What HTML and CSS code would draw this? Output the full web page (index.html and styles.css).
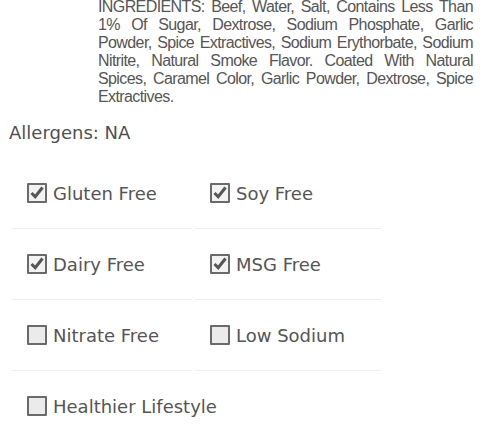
FILE: index.html
```html
<!DOCTYPE html>
<html>
<head>
<meta charset="utf-8">
<link rel="stylesheet" href="styles.css">
</head>
<body>
<div class="page">
  <p class="ingredients"><span class="line">INGREDIENTS: Beef, Water, Salt, Contains Less Than</span> <span class="line">1% Of Sugar, Dextrose, Sodium Phosphate, Garlic</span> <span class="line">Powder, Spice Extractives, Sodium Erythorbate, Sodium</span> <span class="line">Nitrite, Natural Smoke Flavor. Coated With Natural</span> <span class="line">Spices, Caramel Color, Garlic Powder, Dextrose, Spice</span> <span class="line end">Extractives.</span></p>
  <p class="allergens">Allergens: NA</p>
  <div class="grid">
    <div class="cell"><span class="box checked"><svg viewBox="0 0 16 16" width="16" height="16"><path d="M2.5 8 L6.2 11.8 L13.5 2.5" fill="none" stroke="#555" stroke-width="3"/></svg></span><span class="label">Gluten Free</span></div>
    <div class="cell"><span class="box checked"><svg viewBox="0 0 16 16" width="16" height="16"><path d="M2.5 8 L6.2 11.8 L13.5 2.5" fill="none" stroke="#555" stroke-width="3"/></svg></span><span class="label">Soy Free</span></div>
    <div class="cell"><span class="box checked"><svg viewBox="0 0 16 16" width="16" height="16"><path d="M2.5 8 L6.2 11.8 L13.5 2.5" fill="none" stroke="#555" stroke-width="3"/></svg></span><span class="label">Dairy Free</span></div>
    <div class="cell"><span class="box checked"><svg viewBox="0 0 16 16" width="16" height="16"><path d="M2.5 8 L6.2 11.8 L13.5 2.5" fill="none" stroke="#555" stroke-width="3"/></svg></span><span class="label">MSG Free</span></div>
    <div class="cell"><span class="box"></span><span class="label">Nitrate Free</span></div>
    <div class="cell"><span class="box"></span><span class="label">Low Sodium</span></div>
    <div class="cell last"><span class="box"></span><span class="label">Healthier Lifestyle</span></div>
  </div>
</div>
</body>
</html>
```

FILE: styles.css
```css
html, body {
  margin: 0;
  padding: 0;
  background: #fff;
}
.page {
  width: 500px;
  height: 433px;
  overflow: hidden;
}
.ingredients {
  margin: -2px 0 0 98px;
  width: 375px;
  font-family: "Liberation Sans", Arial, sans-serif;
  font-size: 16px;
  line-height: 18px;
  letter-spacing: -0.6px;
  color: #555;
}
.line {
  display: block;
  text-align: justify;
  text-align-last: justify;
  white-space: nowrap;
}
.line.end {
  text-align-last: left;
}
.allergens {
  margin: 16px 0 0 9px;
  font-family: "DejaVu Sans", Verdana, sans-serif;
  font-size: 18px;
  line-height: 22px;
  color: #505050;
}
.grid {
  margin: 14px 0 0 12px;
  display: grid;
  grid-template-columns: 180px 186px;
  column-gap: 3px;
}
.cell {
  height: 70px;
  border-bottom: 1px solid #eeeeee;
  display: flex;
  align-items: center;
  padding-left: 15px;
  white-space: nowrap;
}
.cell.last {
  border-bottom: none;
}
.box {
  box-sizing: border-box;
  width: 20px;
  height: 20px;
  border: 2px solid #6a6a6a;
  background: #ebebeb;
  border-radius: 1px;
  display: flex;
  align-items: center;
  justify-content: center;
  flex: none;
}
.box.checked {
  background: #f2f2f2;
}
.label {
  margin-left: 6px;
  font-family: "DejaVu Sans", Verdana, sans-serif;
  font-size: 18px;
  color: #555;
}
```
